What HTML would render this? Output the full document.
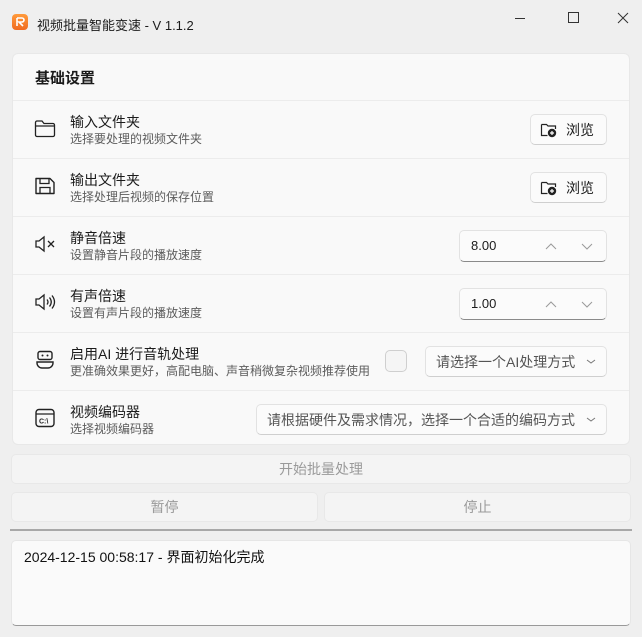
<!DOCTYPE html>
<html><head><meta charset="utf-8"><style>
*{margin:0;padding:0;box-sizing:border-box}
body{width:642px;height:637px;background:#efefef;font-family:"Liberation Sans","Noto Sans CJK SC",sans-serif;color:#1b1b1b;position:relative;overflow:hidden}
.abs{position:absolute}
.card{left:12px;top:53px;width:618px;height:392px;background:#f9f9f9;border-radius:6px;border:1px solid #e8e8e8}
.sep{position:absolute;left:0;width:100%;height:1px;background:#ececec}
.t{font-size:14px;color:#1b1b1b;line-height:16px}
.s{font-size:12px;color:#5c5c5c;line-height:14px}
.btn{background:#fbfbfb;border:1px solid #e2e2e2;border-bottom-color:#cfcfcf;border-radius:5px;font-size:13px}
.dis{background:#f4f4f4;border:1px solid #e8e8e8;border-radius:5px;color:#9a9a9a;font-size:14px;text-align:center}
</style></head><body>
<div class="abs" style="left:12px;top:14px;width:16px;height:16px;border-radius:4px;background:linear-gradient(#ff9a3c,#f06a1f)"><svg width="16" height="16"><path d="M5 4h5a2 2 0 010 4H7l4 4M5 4v8" stroke="#fff" stroke-width="1.6" fill="none"/></svg></div>
<div class="abs" style="left:37px;top:15px;font-size:13px">视频批量智能变速 - V 1.1.2</div>
<svg class="abs" style="left:505px;top:8px" width="130" height="20"><path d="M10 10.5h10" stroke="#333"/><path d="M63.5 4.5h10v10h-10z" stroke="#333" fill="none"/><path d="M113 5l10 10M123 5l-10 10" stroke="#333"/></svg>

<div class="abs card">
<div class="abs" style="left:22px;top:13px;font-size:15px;font-weight:bold">基础设置</div>
<div class="sep" style="top:46px"></div>
<div class="sep" style="top:104px"></div>
<div class="sep" style="top:162px"></div>
<div class="sep" style="top:220px"></div>
<div class="sep" style="top:278px"></div>
<div class="sep" style="top:336px"></div>
</div>

<svg class="abs" style="left:33px;top:117px" width="24" height="24"><path d="M2.5 5.5a1.5 1.5 0 011.5-1.5h5l2 2.5h9a1.5 1.5 0 011.5 1.5v10a1.5 1.5 0 01-1.5 1.5H4a1.5 1.5 0 01-1.5-1.5z" fill="none" stroke="#222" stroke-width="1.3"/><path d="M2.5 9h19" stroke="#222" stroke-width="1.2"/></svg>
<svg class="abs" style="left:33px;top:174px" width="24" height="24"><path d="M3 4.5h14l4 4v11H3z" fill="none" stroke="#222" stroke-width="1.4" stroke-linejoin="round"/><path d="M7 4.5v5h9v-5M7 19.5v-6h10v6" fill="none" stroke="#222" stroke-width="1.3"/></svg>
<svg class="abs" style="left:33px;top:232px" width="24" height="24"><path d="M3 9h3l5-4v14l-5-4H3z" fill="none" stroke="#222" stroke-width="1.3"/><path d="M15 9l6 6M21 9l-6 6" stroke="#222" stroke-width="1.3"/></svg>
<svg class="abs" style="left:33px;top:290px" width="24" height="24"><path d="M3 9h3l5-4v14l-5-4H3z" fill="none" stroke="#222" stroke-width="1.3"/><path d="M14 9.5q2 2.5 0 5M16.5 7.5q3.5 4.5 0 9M19 5.5q5 6.5 0 13" fill="none" stroke="#222" stroke-width="1.3"/></svg>
<svg class="abs" style="left:33px;top:348px" width="24" height="24"><rect x="5" y="3.5" width="14" height="8" rx="2" fill="none" stroke="#222" stroke-width="1.4"/><circle cx="9.5" cy="7.5" r="1" fill="#222"/><circle cx="14.5" cy="7.5" r="1" fill="#222"/><path d="M4 14h16v1a5 5 0 01-5 5H9a5 5 0 01-5-5z" fill="none" stroke="#222" stroke-width="1.4"/></svg>
<svg class="abs" style="left:33px;top:406px" width="24" height="24"><rect x="3" y="3.5" width="18" height="17" rx="3" fill="none" stroke="#222" stroke-width="1.4"/><path d="M3 8h18" stroke="#222" stroke-width="1.3"/><text x="6" y="17.5" font-size="7" font-family="Liberation Sans" font-weight="bold" fill="#222">C:\</text></svg>

<div class="abs t" style="left:70px;top:114px">输入文件夹</div><div class="abs s" style="left:70px;top:132px">选择要处理的视频文件夹</div>
<div class="abs t" style="left:70px;top:172px">输出文件夹</div><div class="abs s" style="left:70px;top:190px">选择处理后视频的保存位置</div>
<div class="abs t" style="left:70px;top:230px">静音倍速</div><div class="abs s" style="left:70px;top:248px">设置静音片段的播放速度</div>
<div class="abs t" style="left:70px;top:288px">有声倍速</div><div class="abs s" style="left:70px;top:306px">设置有声片段的播放速度</div>
<div class="abs t" style="left:70px;top:346px">启用AI 进行音轨处理</div><div class="abs s" style="left:70px;top:364px">更准确效果更好，高配电脑、声音稍微复杂视频推荐使用</div>
<div class="abs t" style="left:70px;top:404px">视频编码器</div><div class="abs s" style="left:70px;top:422px">选择视频编码器</div>

<div class="abs btn" style="left:530px;top:114px;width:77px;height:31px"></div>
<div class="abs btn" style="left:530px;top:172px;width:77px;height:31px"></div>
<svg class="abs" style="left:540px;top:121px" width="18" height="18"><path d="M1.5 3.5h5l1.5 1.5h7.5v3M1.5 3.5v11h6" fill="none" stroke="#222" stroke-width="1.2"/><circle cx="12" cy="12" r="4.2" fill="#222"/><path d="M12 10v4M10 12h4" stroke="#fff" stroke-width="1.2"/></svg>
<svg class="abs" style="left:540px;top:179px" width="18" height="18"><path d="M1.5 3.5h5l1.5 1.5h7.5v3M1.5 3.5v11h6" fill="none" stroke="#222" stroke-width="1.2"/><circle cx="12" cy="12" r="4.2" fill="#222"/><path d="M12 10v4M10 12h4" stroke="#fff" stroke-width="1.2"/></svg>
<div class="abs" style="left:566px;top:120px;font-size:14px">浏览</div>
<div class="abs" style="left:566px;top:178px;font-size:14px">浏览</div>

<div class="abs btn" style="left:459px;top:230px;width:148px;height:32px;border-bottom:1px solid #8a8a8a"></div>
<div class="abs" style="left:471px;top:238px;font-size:13px">8.00</div>
<div class="abs btn" style="left:459px;top:288px;width:148px;height:32px;border-bottom:1px solid #8a8a8a"></div>
<div class="abs" style="left:471px;top:296px;font-size:13px">1.00</div>
<svg class="abs" style="left:540px;top:238px" width="60" height="16"><path d="M6 11l5-5 5 5M42 6l5 5 5-5" fill="none" stroke="#9a9a9a" stroke-width="1"/></svg>
<svg class="abs" style="left:540px;top:296px" width="60" height="16"><path d="M6 11l5-5 5 5M42 6l5 5 5-5" fill="none" stroke="#9a9a9a" stroke-width="1"/></svg>

<div class="abs" style="left:385px;top:350px;width:22px;height:22px;border:1px solid #cfcfcf;border-radius:5px;background:#f5f5f5"></div>
<div class="abs btn" style="left:425px;top:346px;width:182px;height:31px"></div>
<div class="abs" style="left:436px;top:352px;font-size:14px;color:#555">请选择一个AI处理方式</div>
<div class="abs btn" style="left:256px;top:404px;width:351px;height:31px"></div>
<div class="abs" style="left:267px;top:410px;font-size:14px;color:#555">请根据硬件及需求情况，选择一个合适的编码方式</div>
<svg class="abs" style="left:584px;top:355px" width="14" height="12"><path d="M3 5l4 3 4-3" fill="none" stroke="#777"/></svg>
<svg class="abs" style="left:584px;top:413px" width="14" height="12"><path d="M3 5l4 3 4-3" fill="none" stroke="#777"/></svg>

<div class="abs dis" style="left:11px;top:454px;width:620px;height:30px;line-height:28px">开始批量处理</div>
<div class="abs dis" style="left:11px;top:492px;width:307px;height:30px;line-height:28px">暂停</div>
<div class="abs dis" style="left:324px;top:492px;width:307px;height:30px;line-height:28px">停止</div>
<div class="abs" style="left:10px;top:529px;width:622px;height:2px;background:#a8a8a8"></div>
<div class="abs" style="left:11px;top:540px;width:620px;height:86px;background:#fafafa;border:1px solid #e6e6e6;border-bottom:1px solid #999;border-radius:5px"></div>
<div class="abs" style="left:24px;top:547px;font-size:14px;color:#111">2024-12-15 00:58:17 - 界面初始化完成</div>
</body></html>
